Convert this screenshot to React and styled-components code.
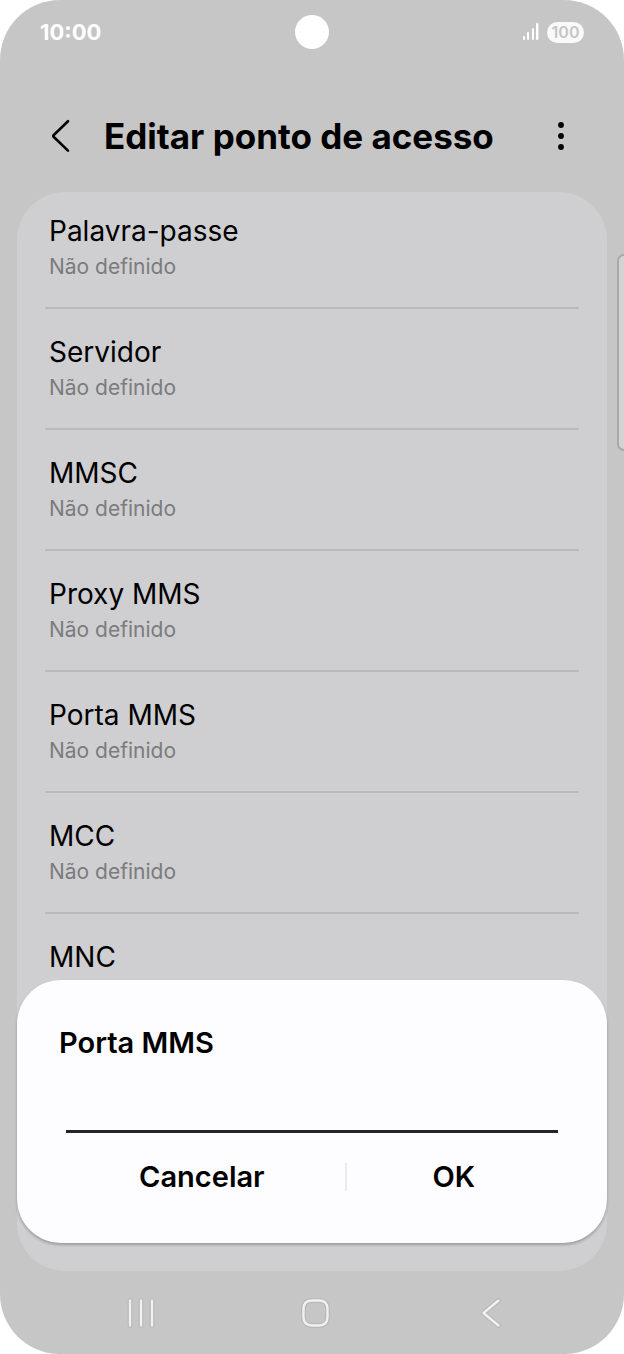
import React, { useState } from 'react';
import styled, { createGlobalStyle } from 'styled-components';

const GlobalStyle = createGlobalStyle`
    * {
        box-sizing: border-box;
    }

    body {
        margin: 0;
        background: #fff;
        color: #000;
        font-family: Inter, 'Liberation Sans', sans-serif;
    }

    button {
        padding: 0;
        border: 0;
        background: none;
        color: inherit;
        font: inherit;
        cursor: pointer;
    }
`;

const Phone = styled.div`
    position: relative;
    display: flex;
    flex-direction: column;
    min-height: 100vh;
    overflow: hidden;
    border-radius: 60px;
    background: #c6c6c6;
`;

const StatusBar = styled.div`
    display: grid;
    grid-template-columns: 1fr auto 1fr;
    align-items: center;
    height: 64px;
    padding: 0 40px;
    color: #fff;
`;

const Clock = styled.time`
    font-size: 22px;
    font-weight: 700;
`;

const Camera = styled.div`
    width: 34px;
    height: 34px;
    border-radius: 50%;
    background: #fff;
`;

const StatusIcons = styled.div`
    display: flex;
    align-items: center;
    justify-content: flex-end;
    gap: 7px;
`;

const Battery = styled.span`
    width: 37px;
    border-radius: 11px;
    background: #fafafa;
    color: #c6c6c6;
    font-size: 16px;
    font-weight: 600;
    line-height: 21px;
    text-align: center;
`;

const Header = styled.header`
    display: flex;
    align-items: center;
    height: 128px;
    padding: 16px 39px 0 36px;
`;

const IconButton = styled.button`
    display: flex;
    align-items: center;
    justify-content: center;
    width: 48px;
    height: 48px;
`;

const PageTitle = styled.h1`
    flex: 1;
    margin: 0 0 0 20px;
    font-size: 35px;
    font-weight: 700;
    line-height: 48px;
`;

const Settings = styled.ul`
    flex: 1;
    margin: 0 17px;
    padding: 0 28px;
    list-style: none;
    border-radius: 48px;
    background: #cfcfd1;
`;

const Item = styled.li`
    padding: 24px 4px;
    border-bottom: 2px solid #bababc;

    &:first-child {
        padding-top: 20px;
    }

    &:last-child {
        border-bottom: 0;
    }
`;

const ItemTitle = styled.div`
    font-size: 28px;
    line-height: 38px;
`;

const ItemValue = styled.div`
    color: #7b7b7d;
    font-size: 21px;
    line-height: 33px;
`;

const EdgeHandle = styled.div`
    position: absolute;
    top: 254px;
    right: 0;
    width: 7px;
    height: 197px;
    border: 2px solid #a9a9ab;
    border-right: 0;
    border-radius: 7px 0 0 7px;
    background: #d3d3d5;
`;

const Dialog = styled.form`
    position: absolute;
    right: 17px;
    bottom: 111px;
    left: 17px;
    padding: 43px 42px 36px;
    border-radius: 44px;
    background: #fdfdff;
    box-shadow: 0 2px 3px rgba(0, 0, 0, 0.25);
`;

const DialogTitle = styled.label`
    display: block;
    font-size: 29px;
    font-weight: 600;
    line-height: 40px;
`;

const FieldRow = styled.div`
    display: flex;
    padding: 22px 7px 0;
`;

const Field = styled.input`
    flex: 1;
    min-width: 0;
    height: 48px;
    padding: 0;
    border: 0;
    border-bottom: 3px solid #252527;
    border-radius: 0;
    outline: 0;
    background: transparent;
    font: inherit;
    font-size: 29px;
`;

const Actions = styled.div`
    display: flex;
    align-items: center;
    padding: 14px 4px 0 0;
`;

const Action = styled.button`
    flex: ${props => props.$grow} 1 0;
    font-size: 29px;
    font-weight: 600;
    line-height: 60px;
`;

const Separator = styled.span`
    width: 2px;
    height: 28px;
    background: #ebebed;
`;

const NavBar = styled.nav`
    display: flex;
    align-items: center;
    justify-content: space-around;
    height: 83px;
    padding: 0 46px 0 54px;
`;

const NavButton = styled(IconButton)`
    width: 80px;
`;

const items = [
    'Palavra-passe',
    'Servidor',
    'MMSC',
    'Proxy MMS',
    'Porta MMS',
    'MCC',
    'MNC',
];

const Signal = () => (
    <svg width="18" height="18" viewBox="0 0 18 18" fill="#fff" aria-hidden="true">
        <rect x="1" y="13" width="2" height="4" rx="1" />
        <rect x="5" y="9" width="2" height="8" rx="1" />
        <rect x="10" y="5" width="2" height="12" rx="1" />
        <rect x="14" y="0" width="2.4" height="17" rx="1" />
    </svg>
);

const BackIcon = () => (
    <svg width="24" height="36" viewBox="0 0 24 36" fill="none" stroke="#000" strokeWidth="2.6" strokeLinecap="round" strokeLinejoin="round">
        <path d="M20 3.2 5.8 17Q4.8 18 5.8 19L20 32.6" />
    </svg>
);

const MoreIcon = () => (
    <svg width="8" height="30" viewBox="0 0 8 30">
        <circle cx="4" cy="4" r="2.9" />
        <circle cx="4" cy="15" r="2.9" />
        <circle cx="4" cy="26" r="2.9" />
    </svg>
);

// every navigation glyph is a light stroke over a wider, darker outline
const NavIcon = ({ d }) => (
    <svg width="32" height="32" viewBox="0 0 32 32" fill="none" strokeLinecap="round" strokeLinejoin="round">
        <path d={d} stroke="#b6b6b6" strokeWidth="4.6" />
        <path d={d} stroke="#f1f1f1" strokeWidth="2.4" />
    </svg>
);

const App = () => {
    const [port, setPort] = useState('');

    return (
        <React.Fragment>
            <GlobalStyle />
            <Phone>
                <StatusBar>
                    <Clock>10:00</Clock>
                    <Camera />
                    <StatusIcons>
                        <Signal />
                        <Battery>100</Battery>
                    </StatusIcons>
                </StatusBar>
                <Header>
                    <IconButton aria-label="Voltar">
                        <BackIcon />
                    </IconButton>
                    <PageTitle>Editar ponto de acesso</PageTitle>
                    <IconButton aria-label="Mais opções">
                        <MoreIcon />
                    </IconButton>
                </Header>
                <Settings>
                    {items.map(title => (
                        <Item key={title}>
                            <ItemTitle>{title}</ItemTitle>
                            <ItemValue>Não definido</ItemValue>
                        </Item>
                    ))}
                </Settings>
                <NavBar>
                    <NavButton aria-label="Recentes">
                        <NavIcon d="M5 3.5V28.5M16 3.5V28.5M27 3.5V28.5" />
                    </NavButton>
                    <NavButton aria-label="Início">
                        <NavIcon d="M12 3.5H19Q27.5 3.5 27.5 12V20Q27.5 28.5 19 28.5H12Q3.5 28.5 3.5 20V12Q3.5 3.5 12 3.5Z" />
                    </NavButton>
                    <NavButton aria-label="Anterior">
                        <NavIcon d="M23.5 3.5 8.5 16 23.5 28.5" />
                    </NavButton>
                </NavBar>
                <EdgeHandle />
                <Dialog onSubmit={e => e.preventDefault()}>
                    <DialogTitle htmlFor="port">Porta MMS</DialogTitle>
                    <FieldRow>
                        <Field
                            id="port"
                            type="text"
                            value={port}
                            onChange={e => setPort(e.target.value)}
                        />
                    </FieldRow>
                    <Actions>
                        <Action type="button" $grow={4}>Cancelar</Action>
                        <Separator />
                        <Action type="submit" $grow={3}>OK</Action>
                    </Actions>
                </Dialog>
            </Phone>
        </React.Fragment>
    );
};

export default App;
